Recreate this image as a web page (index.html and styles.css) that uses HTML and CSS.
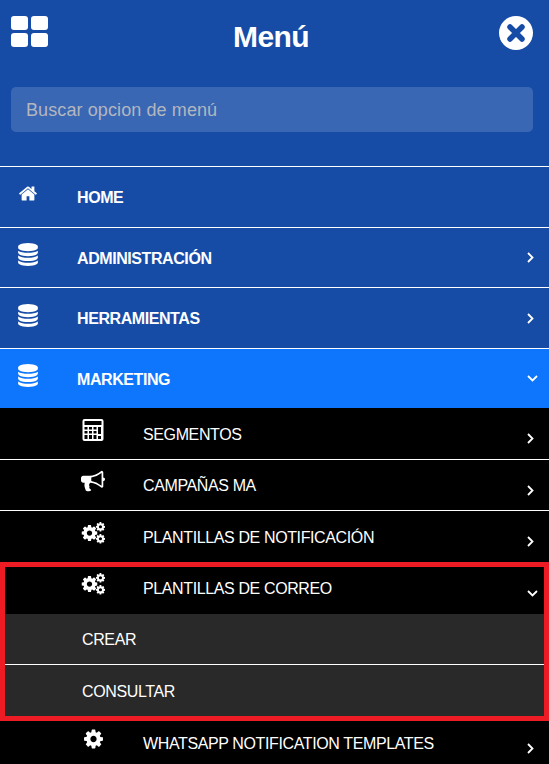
FILE: index.html
```html
<!DOCTYPE html>
<html lang="es">
  <head>
    <meta charset="UTF-8" />
    <meta name="viewport" content="width=device-width, initial-scale=1.0" />
    <title>Menú</title>
    <link rel="stylesheet" href="styles.css">
  </head>
  <body>
    <svg class="defs" width="0" height="0">
      <symbol id="i-database" viewBox="0 0 1536 1792">
        <path d="M768 768q237 0 443-43t325-127v170q0 69-103 128t-280 93.5-385 34.5-385-34.5-280-93.5-103-128v-170q119 84 325 127t443 43zm0 768q237 0 443-43t325-127v170q0 69-103 128t-280 93.5-385 34.5-385-34.5-280-93.5-103-128v-170q119 84 325 127t443 43zm0-384q237 0 443-43t325-127v170q0 69-103 128t-280 93.5-385 34.5-385-34.5-280-93.5-103-128v-170q119 84 325 127t443 43zm0-1152q208 0 385 34.5t280 93.5 103 128v128q0 69-103 128t-280 93.5-385 34.5-385-34.5-280-93.5-103-128v-128q0-69 103-128t280-93.5 385-34.5z"/>
      </symbol>
      <symbol id="i-cog" viewBox="0 0 1536 1792">
        <path d="M1024 896q0-106-75-181t-181-75-181 75-75 181 75 181 181 75 181-75 75-181zm512-109v222q0 12-8 23t-20 13l-185 28q-19 54-39 91 35 50 107 138 10 12 10 25t-9 23q-27 37-99 108t-94 71q-12 0-26-9l-138-108q-44 23-91 38-16 136-29 186-7 28-36 28h-222q-14 0-24.5-8.5t-11.5-21.5l-28-184q-49-16-90-37l-141 107q-10 9-25 9-14 0-25-11-126-114-165-168-7-10-7-23 0-12 8-23 15-21 51-66.5t54-70.5q-27-50-41-99l-183-27q-13-2-21-12.5t-8-23.5v-222q0-12 8-23t19-13l186-28q14-46 39-92-40-57-107-138-10-12-10-24 0-10 9-23 26-36 98.5-107.5t94.5-71.5q13 0 26 10l138 107q44-23 91-38 16-136 29-186 7-28 36-28h222q14 0 24.5 8.5t11.5 21.5l28 184q49 16 90 37l142-107q9-9 24-9 13 0 25 10 129 119 165 170 7 8 7 22 0 12-8 23-15 21-51 66.5t-54 70.5q26 50 41 98l183 28q13 2 21 12.5t8 23.5z"/>
      </symbol>
      <symbol id="i-cogs" viewBox="0 0 24 22">
        <use href="#i-cog" x="0.5" y="1.7" width="16" height="18.7"/>
        <use href="#i-cog" x="14.7" y="-0.7" width="9.5" height="11"/>
        <use href="#i-cog" x="14.7" y="11.3" width="9.5" height="11"/>
      </symbol>
      <symbol id="i-chevron" viewBox="0 0 7 11">
        <path d="M1 1l4.5 4.5L1 10" fill="none" stroke="currentColor" stroke-width="1.8"/>
      </symbol>
      <symbol id="i-chevron-down" viewBox="0 0 11 7">
        <path d="M1 1l4.5 4.5L10 1" fill="none" stroke="currentColor" stroke-width="1.8"/>
      </symbol>
    </svg>

    <div class="menu">
      <header class="menu-head">
        <div class="top-bar">
          <div class="grid-icon">
            <span></span><span></span><span></span><span></span>
          </div>
          <h1>Menú</h1>
          <svg class="close-icon" viewBox="0 0 34 34">
            <circle cx="17" cy="17" r="17" fill="#fff"/>
            <path d="M11 11l12 12M23 11L11 23" stroke="#164ca6" stroke-width="5.5" stroke-linecap="round"/>
          </svg>
        </div>
        <input class="search" type="text" placeholder="Buscar opcion de menú" />
      </header>

      <nav>
        <a class="item">
          <svg class="icon home" viewBox="0 0 1664 1536">
            <path d="M1408 864v480q0 26-19 45t-45 19h-384v-384h-256v384h-384q-26 0-45-19t-19-45v-480q0-1 .5-3t.5-3l575-474 575 474q1 2 1 6zm223-69l-62 74q-8 9-21 11h-3q-13 0-21-7l-692-577-692 577q-12 8-24 7-13-2-21-11l-62-74q-8-10-7-23.5t11-21.5l719-599q32-26 76-26t76 26l244 204v-195q0-14 9-23t23-9h192q14 0 23 9t9 23v408l219 182q10 8 11 21.5t-7 23.5z"/>
          </svg>
          <span class="label">HOME</span>
        </a>
        <a class="item short">
          <svg class="icon"><use href="#i-database"/></svg>
          <span class="label">ADMINISTRACIÓN</span>
          <svg class="chev"><use href="#i-chevron"/></svg>
        </a>
        <a class="item">
          <svg class="icon"><use href="#i-database"/></svg>
          <span class="label">HERRAMIENTAS</span>
          <svg class="chev"><use href="#i-chevron"/></svg>
        </a>
        <a class="item active">
          <svg class="icon"><use href="#i-database"/></svg>
          <span class="label">MARKETING</span>
          <svg class="chev-down"><use href="#i-chevron-down"/></svg>
        </a>

        <div class="sub">
          <a class="sub-item">
            <svg class="sub-icon" viewBox="0 0 21 22">
              <path fill-rule="evenodd" d="M2 0h17a2 2 0 0 1 2 2v18a2 2 0 0 1-2 2H2a2 2 0 0 1-2-2V2a2 2 0 0 1 2-2zm0 2v4h17V2zm0 6v2.500h3V8zm4.500 0v2.500h3V8zm4.500 0v2.500h3V8zm4.500 0v7h3V8zM2 12v2.500h3V12zm4.500 0v2.500h3V12zm4.500 0v2.500h3V12zM2 16v4h3v-4zm4.500 0v4h3v-4zm4.500 0v4h3v-4zm4.500 1v3h3v-3z"/>
            </svg>
            <span class="sub-label">SEGMENTOS</span>
            <svg class="chev"><use href="#i-chevron"/></svg>
          </a>
          <a class="sub-item short">
            <svg class="sub-icon" viewBox="0 0 1792 1536">
              <path d="M1664 512q53 0 90.500 37.500t37.500 90.500-37.500 90.500-90.500 37.500v384q0 52-38 90t-90 38q-417-347-812-380-58 19-91 66t-31 100.500 40 92.500q-20 33-23 65.500t6 58 33.500 55 48 50 61.500 50.500q-29 58-111.500 83t-168.500 11.500-132-55.500q-7-23-29.500-87.500t-32-94.500-23-89-15-101 3.500-98.500 22-110.500h-122q-66 0-113-47t-47-113v-192q0-66 47-113t113-47h480q435 0 896-384 52 0 90 38t38 90v384zm-128 604v-954q-394 302-768 343v270q377 42 768 341z"/>
            </svg>
            <span class="sub-label">CAMPAÑAS MA</span>
            <svg class="chev"><use href="#i-chevron"/></svg>
          </a>
          <a class="sub-item last">
            <svg class="sub-icon"><use href="#i-cogs"/></svg>
            <span class="sub-label">PLANTILLAS DE NOTIFICACIÓN</span>
            <svg class="chev"><use href="#i-chevron"/></svg>
          </a>

          <div class="highlight">
            <a class="sub-item open">
              <svg class="sub-icon"><use href="#i-cogs"/></svg>
              <span class="sub-label">PLANTILLAS DE CORREO</span>
              <svg class="chev-down thin"><use href="#i-chevron-down"/></svg>
            </a>
            <a class="leaf">CREAR</a>
            <a class="leaf">CONSULTAR</a>
          </div>

          <a class="sub-item last whatsapp">
            <svg class="sub-icon single"><use href="#i-cog"/></svg>
            <span class="sub-label">WHATSAPP NOTIFICATION TEMPLATES</span>
            <svg class="chev"><use href="#i-chevron"/></svg>
          </a>
        </div>
      </nav>
    </div>
  </body>
</html>
```

FILE: styles.css
```css
html,
body {
  margin: 0;
  height: 100%;
  overflow: hidden;
}
body {
  font-family: "Liberation Sans", Arial, sans-serif;
  color: #fff;
  background: #000;
}
a {
  color: inherit;
  text-decoration: none;
}
.defs {
  display: block;
  height: 0;
}
.menu {
  height: 764px;
  overflow: hidden;
  background: #000;
}
.menu-head {
  height: 166px;
  box-sizing: border-box;
  padding: 16px 16px 0 11px;
  background: #164ca6;
}
.top-bar {
  display: flex;
  justify-content: space-between;
  align-items: flex-start;
}
.top-bar h1 {
  margin: 3px 5px 0 0;
  font-size: 30px;
  line-height: 36px;
  font-weight: 700;
  letter-spacing: -0.6px;
}
.grid-icon {
  width: 37px;
  height: 31px;
  display: grid;
  grid-template-columns: 1fr 1fr;
  grid-template-rows: 1fr 1fr;
  gap: 3px;
}
.grid-icon span {
  background: #fff;
  border-radius: 3px;
}
.close-icon {
  width: 34px;
  height: 34px;
}
.search {
  display: block;
  box-sizing: border-box;
  width: 100%;
  height: 45px;
  margin-top: 32px;
  padding: 2px 15px 0;
  border: none;
  border-radius: 5px;
  background: #3a67b4;
  font-family: inherit;
  font-size: 18px;
  letter-spacing: 0.1px;
  outline: none;
}
.search::placeholder {
  color: #b3b6bf;
  opacity: 1;
}
.item {
  display: flex;
  align-items: center;
  height: 60px;
  border-top: 1px solid #fff;
  background: #164ca6;
}
.item.short {
  height: 59px;
}
.item.active {
  height: 59px;
  background: #0d76fd;
}
.icon {
  width: 20px;
  height: 23px;
  margin: 0 39px 0 18px;
  position: relative;
  top: -3px;
  fill: #fff;
}
.icon.home {
  height: 17px;
  top: -4px;
}
.label {
  flex: 1;
  padding-top: 2px;
  font-size: 16px;
  font-weight: 700;
  letter-spacing: -0.42px;
}
.chev {
  width: 7px;
  height: 11px;
  margin-right: 15px;
}
.chev-down {
  width: 11px;
  height: 7px;
  margin-right: 11px;
}
.sub-item {
  display: flex;
  align-items: center;
  height: 51px;
  border-bottom: 1px solid #fff;
}
.sub-item.short {
  height: 50px;
}
.sub-item.last {
  border-bottom: none;
}
.sub-item.whatsapp {
  height: 44px;
}
.sub-item .chev,
.sub-item .chev-down {
  position: relative;
  top: 5px;
}
.sub-icon {
  width: 24px;
  height: 22px;
  margin: 0 38px 0 81px;
  position: relative;
  top: -4px;
  fill: #fff;
}
.sub-icon.single {
  width: 19px;
  height: 22px;
  margin: 0 40px 0 84px;
}
.sub-label {
  flex: 1;
  padding-top: 2px;
  font-size: 16px;
  letter-spacing: -0.38px;
}
.highlight {
  outline: 5px solid #ed1c24;
  outline-offset: -5px;
  position: relative;
}
.sub-item.open {
  height: 52px;
  border-bottom: none;
}
.leaf {
  display: flex;
  align-items: center;
  height: 50px;
  padding-left: 82px;
  box-sizing: border-box;
  padding-top: 2px;
  background: #292929;
  font-size: 16px;
  letter-spacing: -0.38px;
}
.leaf + .leaf {
  height: 57px;
  padding-top: 2px;
  padding-bottom: 5px;
  border-top: 1px solid #fff;
}
```
